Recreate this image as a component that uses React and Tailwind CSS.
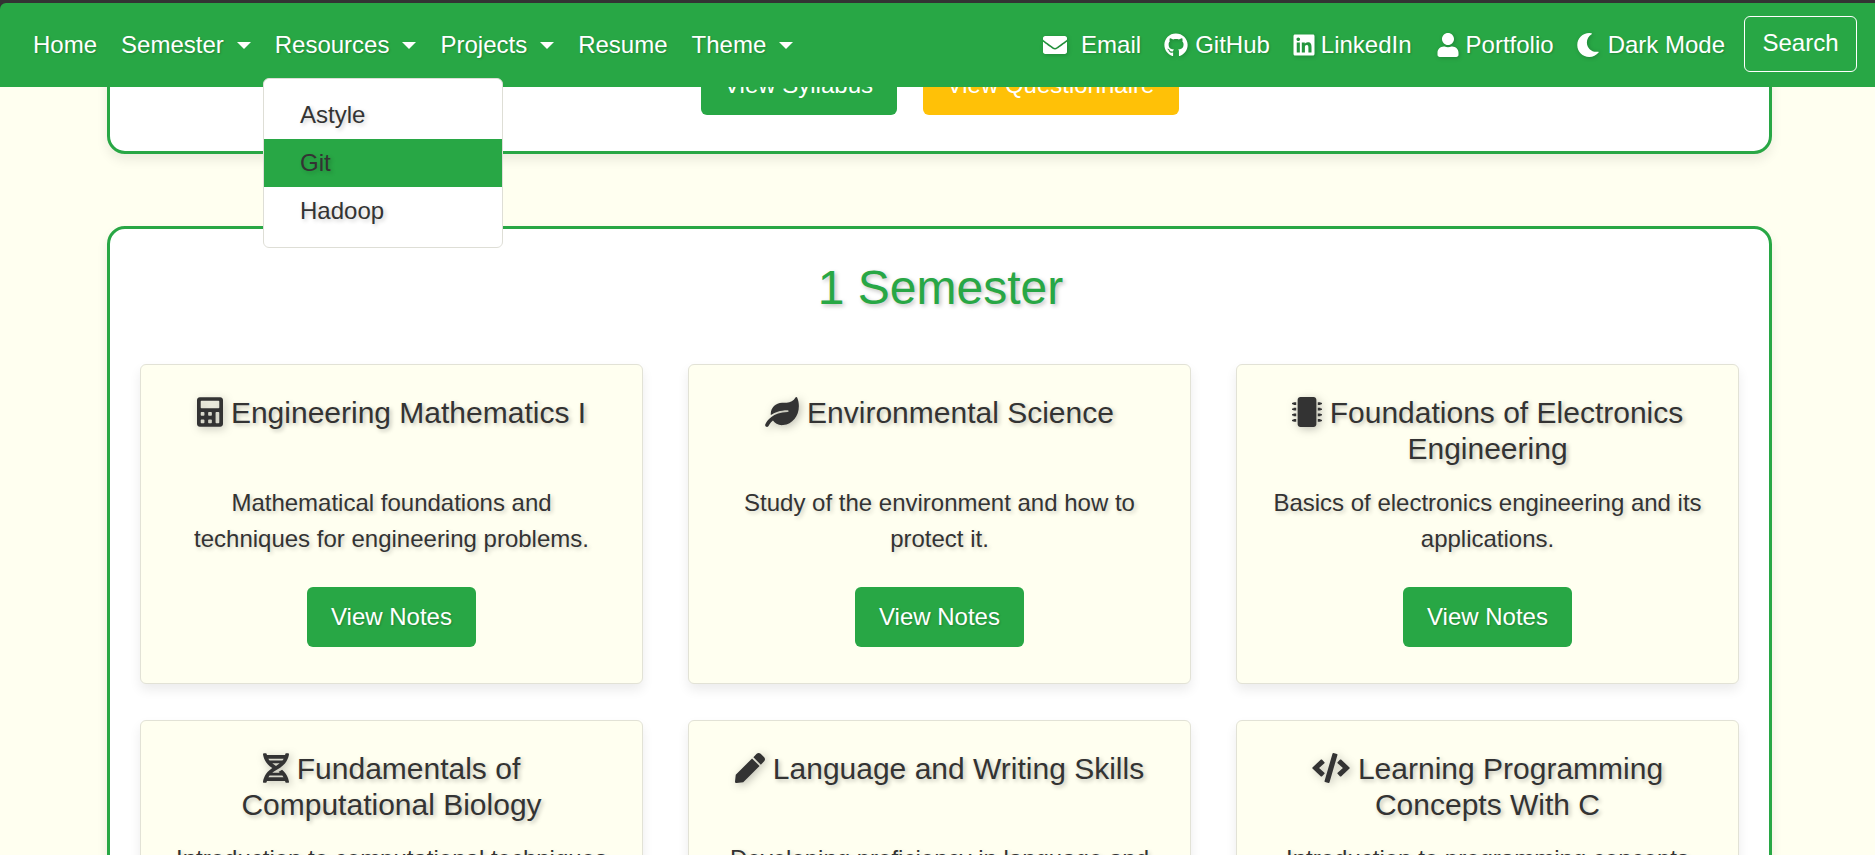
import { FaEnvelope, FaGithub, FaLinkedin, FaUser, FaMoon, FaCalculator, FaLeaf, FaMicrochip, FaDna, FaPen, FaCode } from "react-icons/fa";

const subjects = [
  { icon: FaCalculator, iconWidth: "w-[26px]", title: "Engineering Mathematics I", text: "Mathematical foundations and techniques for engineering problems." },
  { icon: FaLeaf, iconWidth: "w-[34px]", title: "Environmental Science", text: "Study of the environment and how to protect it." },
  { icon: FaMicrochip, iconWidth: "w-[30px]", title: "Foundations of Electronics Engineering", text: "Basics of electronics engineering and its applications." },
  { icon: FaDna, iconWidth: "w-[26px]", title: "Fundamentals of Computational Biology", text: "Introduction to computational techniques in biology." },
  { icon: FaPen, iconWidth: "w-[30px]", title: "Language and Writing Skills", text: "Developing proficiency in language and writing skills." },
  { icon: FaCode, iconWidth: "w-[38px]", title: "Learning Programming Concepts With C", text: "Introduction to programming concepts using C." },
];

function Caret() {
  return <span className="ml-[13px] inline-block h-0 w-0 border-x-[7px] border-t-[7px] border-x-transparent border-t-white" />;
}

function NavLink({ label, caret }) {
  return (
    <a className="flex items-center px-3 text-white [text-shadow:1px_1px_2px_rgba(0,0,0,0.2)]">
      {label}
      {caret && <Caret />}
    </a>
  );
}

function IconLink({ icon: Icon, label, className }) {
  return (
    <a className={`flex items-center px-3 text-white [text-shadow:1px_1px_2px_rgba(0,0,0,0.2)] ${className}`}>
      <Icon className="h-6 w-auto drop-shadow-[1px_1px_2px_rgba(0,0,0,0.2)]" />
      {label}
    </a>
  );
}

function Navbar() {
  return (
    <nav className="fixed inset-x-0 top-0 z-10 bg-[#333]">
      <div className="mt-[3px] flex h-[84px] items-center rounded-tl-md bg-[#28a745] pl-[21px] pr-[18px] text-[24px]">
        <NavLink label="Home" />
        <NavLink label="Semester" caret />
        <NavLink label="Resources" caret />
        <NavLink label="Projects" caret />
        <NavLink label="Resume" />
        <NavLink label="Theme" caret />
        <div className="ml-auto flex items-center">
          <IconLink icon={FaEnvelope} label="Email" className="gap-[14px]" />
          <IconLink icon={FaGithub} label="GitHub" className="-ml-px gap-[7px]" />
          <IconLink icon={FaLinkedin} label="LinkedIn" className="-ml-[2px] gap-[5px]" />
          <IconLink icon={FaUser} label="Portfolio" className="gap-[6px]" />
          <IconLink icon={FaMoon} label="Dark Mode" className="-ml-[2px] gap-[8px]" />
          <button className="ml-[7px] mb-[3px] h-14 w-[113px] rounded-md border border-white pb-[2px] text-white">Search</button>
        </div>
      </div>
    </nav>
  );
}

function ResourcesMenu() {
  return (
    <div className="fixed left-[263px] top-[78px] z-20 w-[240px] rounded-md border border-[#deded6] bg-white py-3 text-[24px] text-[#333] [text-shadow:2px_2px_4px_rgba(0,0,0,0.2)]">
      <div className="h-12 px-9 leading-[48px]">Astyle</div>
      <div className="h-12 bg-[#28a745] px-9 leading-[48px]">Git</div>
      <div className="h-12 px-9 leading-[48px]">Hadoop</div>
    </div>
  );
}

function SubjectCard({ icon: Icon, iconWidth, title, text }) {
  return (
    <div className="rounded-md border border-[#e2e2d6] bg-[#fffff0] px-[30px] pb-9 pt-[30px] text-center text-[#333] shadow-[0_6px_12px_rgba(0,0,0,0.08)]">
      <h5 className="mb-[18px] min-h-[72px] text-[30px] leading-[36px] [text-shadow:2px_2px_4px_rgba(0,0,0,0.25)]">
        <Icon className={`mr-2 inline-block h-[30px] align-[-0.125em] drop-shadow-[2px_2px_4px_rgba(0,0,0,0.25)] ${iconWidth}`} />
        {title}
      </h5>
      <p className="mb-[30px] min-h-[72px] text-[24px] leading-[36px] [text-shadow:2px_2px_4px_rgba(0,0,0,0.2)]">{text}</p>
      <button className="h-[60px] w-[169px] rounded-md bg-[#28a745] text-[24px] text-white [text-shadow:1px_1px_2px_rgba(0,0,0,0.2)]">View Notes</button>
    </div>
  );
}

export default function App() {
  return (
    <div className="h-[855px] overflow-hidden bg-[#fffff0] pl-[107px] pr-[103px] font-['Liberation_Sans',Arial,sans-serif]">
      <Navbar />
      <ResourcesMenu />

      {/* Syllabus card, mostly scrolled under the navbar */}
      <section className="mt-[10px] flex justify-center gap-[26px] rounded-b-[18px] border-[3px] border-[#28a745] bg-white pb-9 pt-[42px] shadow-[0_6px_12px_rgba(0,0,0,0.08)]">
        <button className="h-[60px] w-[196px] rounded-md bg-[#28a745] text-[24px] text-white">View Syllabus</button>
        <button className="h-[60px] w-[256px] rounded-md bg-[#ffc107] text-[24px] text-white">View Questionnaire</button>
      </section>

      {/* Semester card */}
      <section className="mt-[72px] rounded-[18px] border-[3px] border-[#28a745] bg-white px-[30px] pt-[30px] shadow-[0_6px_12px_rgba(0,0,0,0.08)]">
        <h2 className="mb-[47px] pl-[2px] text-center text-[48px] leading-[58px] text-[#28a745] [text-shadow:2px_2px_4px_rgba(0,0,0,0.25)]">1 Semester</h2>
        <div className="grid grid-cols-3 gap-x-[45px] gap-y-[36px]">
          {subjects.map((s) => (
            <SubjectCard key={s.title} {...s} />
          ))}
        </div>
      </section>
    </div>
  );
}
